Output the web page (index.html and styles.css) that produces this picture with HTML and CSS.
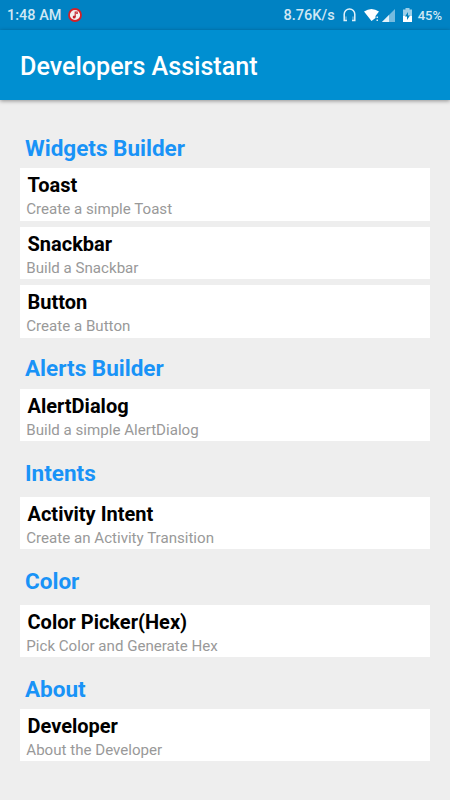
FILE: index.html
```html
<!DOCTYPE html>
<html lang="en">
<head>
<meta charset="utf-8">
<title>Developers Assistant</title>
<link rel="stylesheet" href="styles.css">
</head>
<body>
<div class="status">
  <span class="time">1:48 AM</span>
  <svg class="music" width="14" height="14" viewBox="0 0 14 14"><circle cx="7" cy="7" r="6" fill="#f3eeee" stroke="#d32027" stroke-width="1.800"/><path d="M7.200 9V4h2v1.500h-1" stroke="#c4202a" stroke-width="1.100" fill="none"/><circle cx="6.200" cy="9" r="1.500" fill="#c4202a"/></svg>
  <span class="speed">8.76K/s</span>
  <svg class="phones" width="13" height="14" viewBox="0 0 13 14"><path d="M4 12.500H1.200V6.200a5.300 5.300 0 0 1 10.600 0v6.300H9" fill="none" stroke="#e3f2fa" stroke-width="1.500"/><path d="M2 8.500h2v4H2zM9 8.500h2v4H9z" fill="#b5dbef" opacity=".4"/></svg>
  <svg class="wifi" width="16" height="14" viewBox="0 0 16 14"><path d="M0 3.500Q7.500-1.500 15 3.500L11.500 8v2L7.500 13z" fill="#fff"/><path d="M12.500 8.500H14V10h-1.500zM12.500 11.500H14V13h-1.500z" fill="#d9edf7"/></svg>
  <svg class="signal" width="13" height="13" viewBox="0 0 13 13"><path d="M13 0v13H0z" fill="#75bbdf"/><path d="M7 6v7H0z" fill="#e3f2fa"/></svg>
  <svg class="battery" width="9" height="14" viewBox="0 0 9 14"><path d="M0 1.500h2.500V0h4v1.500H9V8H0z" fill="#9bcfe9"/><path d="M0 8h9v6H0z" fill="#fff"/><path d="M5 4L2 8.500h2V12l3-4.500H5z" fill="#0081bc"/></svg>
  <span class="percent">45%</span>
</div>
<header class="appbar"><h1>Developers Assistant</h1></header>
<main>
  <section><h2>Widgets Builder</h2>
    <div class="item"><h3>Toast</h3><p>Create a simple Toast</p></div>
    <div class="item"><h3>Snackbar</h3><p>Build a Snackbar</p></div>
    <div class="item"><h3>Button</h3><p>Create a Button</p></div>
  </section>
  <section class="alerts"><h2>Alerts Builder</h2>
    <div class="item"><h3>AlertDialog</h3><p>Build a simple AlertDialog</p></div>
  </section>
  <section class="spaced"><h2>Intents</h2>
    <div class="item"><h3>Activity Intent</h3><p>Create an Activity Transition</p></div>
  </section>
  <section class="spaced"><h2>Color</h2>
    <div class="item"><h3>Color Picker(Hex)</h3><p>Pick Color and Generate Hex</p></div>
  </section>
  <section><h2>About</h2>
    <div class="item"><h3>Developer</h3><p>About the Developer</p></div>
  </section>
</main>
</body>
</html>
```
FILE: styles.css
```css
* { box-sizing: border-box; margin: 0; padding: 0; }
body { width: 450px; height: 800px; overflow: hidden; background: #eee; font-family: Roboto, sans-serif; }
.status { height: 30px; padding: 1px 8px 0 7px; display: flex; align-items: center; background: #0082c3; color: #d0e8f4; font-size: 14.5px; font-weight: 500; }
.music { margin: -1px 0 0 7px; }
.speed { margin-left: auto; }
.phones { margin: -1px 0 0 8px; }
.wifi { margin: -1px 0 0 8px; }
.signal { margin-left: 2px; }
.battery { margin: -1px 0 0 8px; }
.percent { margin-left: 6px; font-size: 13px; }
.appbar { height: 70px; padding: 4px 20px 0; display: flex; align-items: center; background: #008fd1; box-shadow: 0 1px 4px rgba(0,0,0,.4); }
h1 { color: #fff; font-size: 25.1px; font-weight: 500; line-height: 30px; }
main { padding: 34px 20px 0; }
h2 { margin-bottom: 6px; padding-left: 5px; height: 28px; line-height: 28px; font-size: 22.5px; font-weight: 700; color: #1993f7; }
.item { height: 52.5px; margin-bottom: 6.2px; padding: 5px 6px 0; background: #fff; }
.item:last-child { margin-bottom: 0; }
h3 { padding-left: 1.5px; height: 25px; line-height: 25px; font-size: 20px; font-weight: 700; color: #000; }
p { padding-left: .3px; height: 22px; line-height: 22px; font-size: 15.1px; color: #999; }
section { margin-bottom: 16.5px; }
.alerts h2 { margin-bottom: 6.4px; }
.spaced { padding-top: 1px; }
.spaced h2 { margin-bottom: 10px; }
section:last-child { padding-top: 1.2px; }
```
